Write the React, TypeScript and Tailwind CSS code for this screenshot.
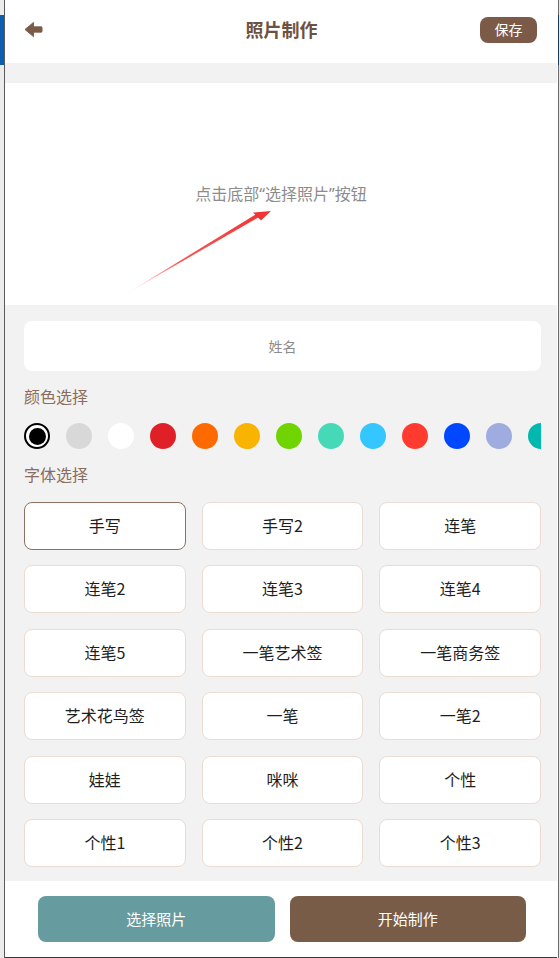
import React, { useState } from 'react';

const colors = [
    '#000000', '#d8d8d8', '#ffffff', '#e02027', '#ff6a00', '#f8b400', '#6fd400',
    '#46d9b8', '#33c6ff', '#ff3b30', '#0048ff', '#9eacdf', '#00b8ad',
];

const fonts = [
    '手写', '手写2', '连笔',
    '连笔2', '连笔3', '连笔4',
    '连笔5', '一笔艺术签', '一笔商务签',
    '艺术花鸟签', '一笔', '一笔2',
    '娃娃', '咪咪', '个性',
    '个性1', '个性2', '个性3',
];

export default function App() {
    const [color, setColor] = useState(0);
    const [font, setFont] = useState(0);

    return (
        <div className="w-[560px] h-[958px] flex overflow-hidden bg-white" style={{ fontFamily: '"Noto Sans CJK SC", "Noto Sans", sans-serif' }}>
            {/* desktop edges behind the phone frame */}
            <div className="w-[4px] flex flex-col bg-[#ececec]">
                <div className="h-[15px]" />
                <div className="h-[50px] bg-[#0a5fb0]" />
            </div>
            <div className="w-[1px] bg-[#5a5a5a]" />

            <div className="w-[552px] flex flex-col">
                {/* Header */}
                <div className="h-[63px] bg-white flex items-center justify-between pl-[19px] pr-[19px] pb-[4px]">
                    <svg className="w-[19px] h-[17px]" viewBox="0 0 20 18">
                        <path d="M1 9 L10 1.5 L10 6.2 L18.5 6.2 Q19 6.2 19 7 L19 11 Q19 11.8 18.5 11.8 L10 11.8 L10 16.5 Z" fill="#7a5b47" strokeLinejoin="round" stroke="#7a5b47" strokeWidth="1" />
                    </svg>
                    <h1 className="text-[18px] font-bold text-[#6e5241] ml-[40px]">照片制作</h1>
                    <button className="w-[57px] h-[26px] rounded-[8px] bg-[#7b5b47] text-white text-[14px] flex items-center justify-center mr-[1px]">保存</button>
                </div>
                <div className="h-[20px] bg-[#f2f2f2]" />

                {/* Photo area */}
                <div className="h-[222px] bg-white relative flex items-center justify-center">
                    <p className="text-[16px] text-[#8c8c8c]" style={{ fontFamily: '"Noto Sans", "Noto Sans CJK SC", sans-serif' }}>点击底部“选择照片”按钮</p>
                    <svg className="absolute left-0 top-0" width="552" height="222" viewBox="0 0 552 222">
                        <defs>
                            <linearGradient id="arrowGrad" x1="125" y1="208" x2="266" y2="128" gradientUnits="userSpaceOnUse">
                                <stop offset="0" stopColor="#ff4040" stopOpacity="0.15" />
                                <stop offset="0.35" stopColor="#f23a3a" stopOpacity="0.85" />
                                <stop offset="1" stopColor="#f03434" />
                            </linearGradient>
                        </defs>
                        <polygon points="124,209 255,133.5 253,130 " fill="url(#arrowGrad)" />
                        <polygon points="266,128 248,129.5 256,137.5" fill="#f03434" />
                    </svg>
                </div>

                {/* Options */}
                <div className="flex-1 bg-[#f2f2f2] pl-[19px] pr-[16px] pt-[16px]">
                    <div className="h-[50px] rounded-[8px] bg-white flex items-center justify-center text-[14px] text-[#8c8c8c]">姓名</div>

                    <div className="mt-[15px] text-[16px] leading-[20px] text-[#8a6d5c]">颜色选择</div>
                    <div className="mt-[17px] flex gap-[16px] overflow-hidden">
                        {colors.map((c, i) => (
                            <button
                                key={c}
                                onClick={() => setColor(i)}
                                className={`shrink-0 w-[26px] h-[26px] rounded-full flex items-center justify-center ${i === color ? 'border-2 border-black bg-white' : ''}`}
                                style={{ backgroundColor: i === color ? '#ffffff' : c }}
                            >
                                {i === color && <span className="w-[17px] h-[17px] rounded-full" style={{ backgroundColor: c }} />}
                            </button>
                        ))}
                    </div>

                    <div className="mt-[15px] text-[16px] leading-[20px] text-[#8a6d5c]">字体选择</div>
                    <div className="mt-[18px] grid grid-cols-3 gap-x-[16px] gap-y-[15.4px]">
                        {fonts.map((f, i) => (
                            <button
                                key={f}
                                onClick={() => setFont(i)}
                                className={`h-[48px] pb-[2px] rounded-[8px] bg-white text-[16px] text-[#1e1e1e] flex items-center justify-center border ${i === font ? 'border-[#8b7262]' : 'border-[#eadcd2]'}`}
                            >
                                {f}
                            </button>
                        ))}
                    </div>
                </div>

                {/* Bottom actions */}
                <div className="h-[76px] bg-white flex items-center gap-[15px] pl-[33px] pr-[31px] shrink-0">
                    <button className="flex-1 h-[46px] rounded-[8px] bg-[#669c9f] text-white text-[15px]">选择照片</button>
                    <button className="flex-1 h-[46px] rounded-[8px] bg-[#785c48] text-white text-[15px]">开始制作</button>
                </div>
                <div className="h-[1px] bg-[#3a3a3a] shrink-0" />
            </div>

            <div className="w-[1px] bg-white" />
            <div className="w-[1px] flex flex-col bg-[#6a6a6a]">
                <div className="h-[15px]" />
                <div className="h-[50px] bg-[#1d3a5a]" />
            </div>
            <div className="w-[1px] bg-[#e8e8e8]" />
        </div>
    );
}
